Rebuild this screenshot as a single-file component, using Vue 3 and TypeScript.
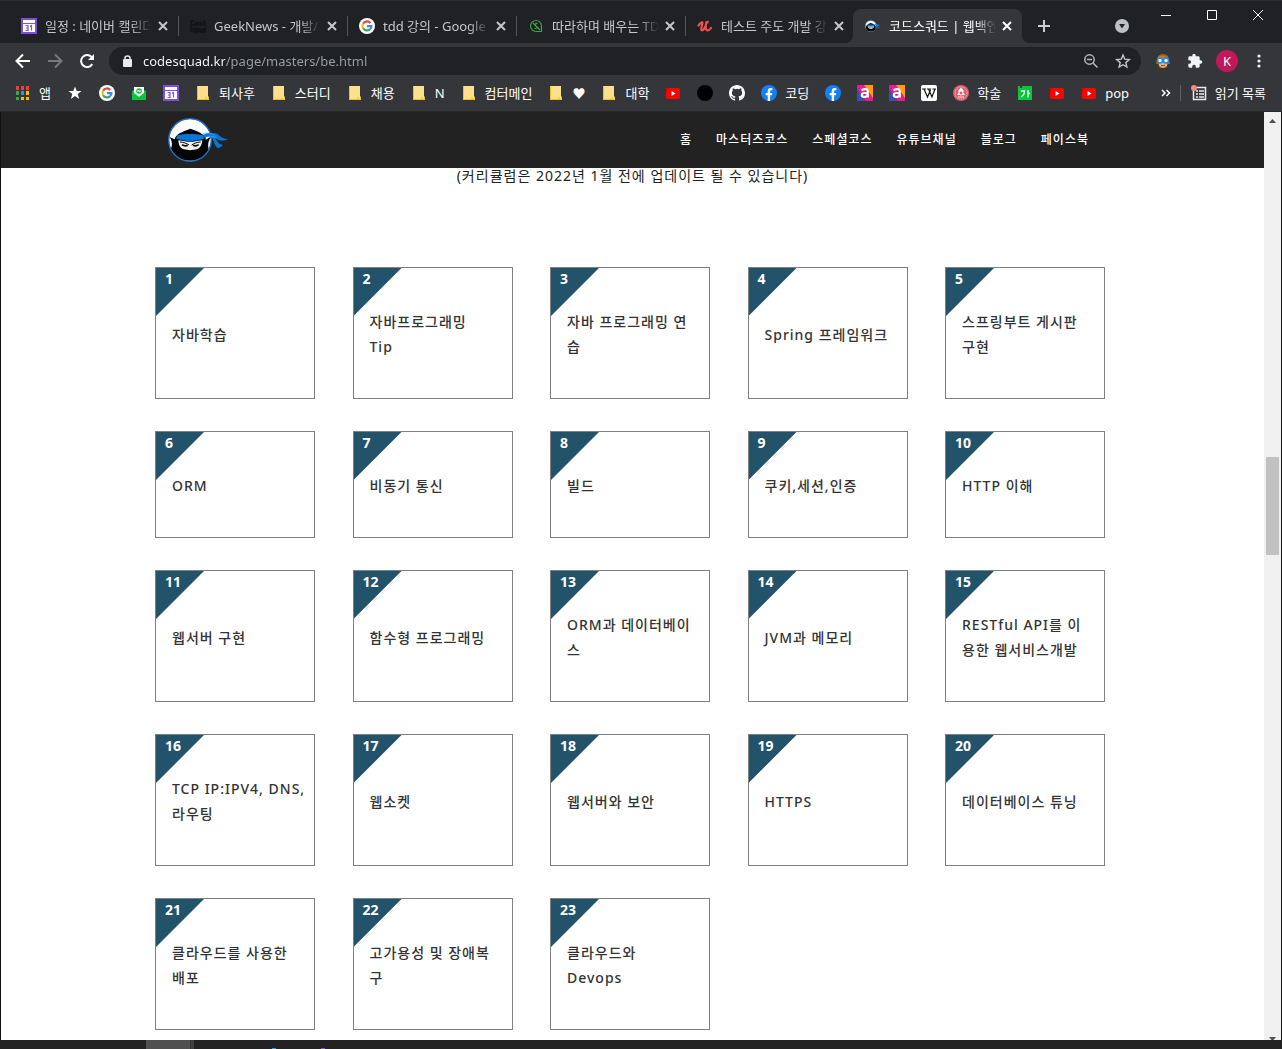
<script setup lang="ts">
interface Tab { icon: string; title: string; active?: boolean }
interface Bookmark { icon: string; label?: string; name: string }

const tabs: Tab[] = [
  { icon: 'calendar', title: '일정 : 네이버 캘린더' },
  { icon: 'geek', title: 'GeekNews - 개발/기술' },
  { icon: 'google', title: 'tdd 강의 - Google 검색' },
  { icon: 'leaf', title: '따라하며 배우는 TDD' },
  { icon: 'udemy', title: '테스트 주도 개발 강의' },
  { icon: 'ninja', title: '코드스쿼드 | 웹백엔드', active: true },
]

const bookmarks: Bookmark[] = [
  { icon: 'apps', label: '앱', name: '앱' },
  { icon: 'star', name: '즐겨찾기' },
  { icon: 'google', name: 'Google' },
  { icon: 'mail', name: '메일' },
  { icon: 'calendar', name: '캘린더' },
  { icon: 'folder', label: '퇴사후', name: '퇴사후' },
  { icon: 'folder', label: '스터디', name: '스터디' },
  { icon: 'folder', label: '채용', name: '채용' },
  { icon: 'folder', label: 'N', name: 'N' },
  { icon: 'folder', label: '컴터메인', name: '컴터메인' },
  { icon: 'folder', label: '♥', name: '♥' },
  { icon: 'folder', label: '대학', name: '대학' },
  { icon: 'youtube', name: 'YouTube' },
  { icon: 'dot', name: '검정' },
  { icon: 'github', name: 'GitHub' },
  { icon: 'facebook', label: '코딩', name: '코딩' },
  { icon: 'facebook', name: 'Facebook' },
  { icon: 'able', name: '에이블' },
  { icon: 'able', name: '에이블' },
  { icon: 'wiki', name: 'Wikipedia' },
  { icon: 'seal', label: '학술', name: '학술' },
  { icon: 'spell', name: '맞춤법' },
  { icon: 'youtube', name: 'YouTube' },
  { icon: 'youtube', label: 'pop', name: 'pop' },
]

const menu: string[] = ['홈', '마스터즈코스', '스페셜코스', '유튜브채널', '블로그', '페이스북']

const courses: string[] = [
  '자바학습', '자바프로그래밍\nTip', '자바 프로그래밍 연\n습', 'Spring 프레임워크', '스프링부트 게시판\n구현',
  'ORM', '비동기 통신', '빌드', '쿠키,세션,인증', 'HTTP 이해',
  '웹서버 구현', '함수형 프로그래밍', 'ORM과 데이터베이\n스', 'JVM과 메모리', 'RESTful API를 이\n용한 웹서비스개발',
  'TCP IP:IPV4, DNS,\n라우팅', '웹소켓', '웹서버와 보안', 'HTTPS', '데이터베이스 튜닝',
  '클라우드를 사용한\n배포', '고가용성 및 장애복\n구', '클라우드와\nDevops',
]
</script>

<template>
  <svg class="sprite" aria-hidden="true">
    <symbol id="i-calendar" viewBox="0 0 16 16">
      <rect width="16" height="16" fill="#7b50e0" /><rect x="2" y="2" width="12" height="3" fill="#fff" /><rect x="2" y="6" width="12" height="8" fill="#fff" />
      <path d="M4.500 7.500H7V12.500H4.500M5 10H7M9 8.500L10.500 7.500V12.500" fill="none" stroke="#7b50e0" stroke-width="1.200" />
    </symbol>
    <symbol id="i-geek" viewBox="0 0 16 16">
      <g fill="none" stroke="#111214" stroke-width="1.300">
        <path d="M4 3H1v4h3V5M6 5h2.500M8 4.500H6V7h2.500M10 5.500h2.500M12.500 4.500H10V7h2.500M14 2v5M16 4l-2 2 2 1.500" />
        <path d="M1 14V9l3 5V9M6 12h2.500v-1.500H6V14h2.500M10 10v4h1.500v-3V14H13v-4M16 10.500h-1.500V12H16v2h-2" />
      </g>
    </symbol>
    <symbol id="i-google" viewBox="0 0 16 16">
      <circle cx="8" cy="8" r="8" fill="#fff" />
      <g fill="none" stroke-width="2.200">
        <path d="M4.100 5.700A4.500 4.500 0 0 1 11.300 4.900" stroke="#ea4335" />
        <path d="M4.100 5.700A4.500 4.500 0 0 0 4.100 10.300" stroke="#fbbc05" />
        <path d="M4.100 10.300A4.500 4.500 0 0 0 10.900 11.400" stroke="#34a853" />
        <path d="M8 8.200h4.400A4.500 4.500 0 0 1 10.900 11.400" stroke="#4285f4" />
      </g>
    </symbol>
    <symbol id="i-leaf" viewBox="0 0 16 16">
      <g fill="none" stroke="#35a84a" stroke-width="1.200">
        <path d="M8 2.500A5.500 5.500 0 1 0 8 13.500H13.500V8A5.500 5.500 0 0 0 8 2.500Z" /><path d="M5 5L12 12M9.500 5.500C7.500 5 6.500 7 8 8S9.500 10.500 6.500 10.500" />
      </g>
    </symbol>
    <symbol id="i-udemy" viewBox="0 0 16 16">
      <path d="M1.500 7.500C3 5 5 4 5.500 4.500S3.500 10 4.500 12C6 13.500 9 9 9.500 4C8.500 8 8.500 12 10.500 12.500C12 12.500 13 11.500 14 10" fill="none" stroke="#ec5252" stroke-width="2.200" stroke-linecap="round" stroke-linejoin="round" />
      <path d="M9 3.500L12 2.500L11 6Z" fill="#ec5252" />
    </symbol>
    <symbol id="i-ninja" viewBox="84 27 180 138">
      <circle cx="150" cy="96" r="63" fill="#fff" />
      <path d="M89 87L104 94C105 87 111 80 119 76C128 71 137 67 151 62C166 67 178 71 186 78C196 82 199 88 197 95L212 86C208 96 202 104 206 122C200 146 176 158 150 158C122 158 100 146 93 122C98 108 96 99 89 87Z" fill="#050505" />
      <circle cx="150" cy="96" r="64" fill="none" stroke="#1871cc" stroke-width="4" />
      <path d="M112 82C136 76 168 77 190 82L192 92C177 96 162 98 151 101C139 98 122 95 108 92Z" fill="#0875d8" />
      <path d="M190 82C203 70 218 75 233 78C242 88 251 93 264 94C251 101 239 98 225 91C234 104 239 109 249 111C243 116 241 120 233 120C222 114 224 98 213 87C205 85 198 86 190 91Z" fill="#0875d8" />
      <path d="M188 78C200 72 213 77 226 82M207 84L230 88" fill="none" stroke="#59aef5" stroke-width="2" />
      <path d="M115 97C130 99 140 102 151 102C162 102 172 99 187 97C185 111 182 120 170 124Q150 129 132 124C119 120 116 110 115 97Z" fill="#f1f1f1" />
      <path d="M120 102C132 103 140 106 147 111M182 102C170 103 162 106 155 111" fill="none" stroke="#0b0b0b" stroke-width="3" />
      <path d="M126 110Q134 116 143 112M159 112Q168 116 176 110" fill="none" stroke="#0b0b0b" stroke-width="5" />
    </symbol>
    <symbol id="i-apps" viewBox="0 0 16 16">
      <path d="M1 1h3v4H1zM6 1h3v4H6zM11 1h3v4h-3z" fill="#ea4335" />
      <path d="M1 6h3v4H1zM1 12h3v3H1z" fill="#34a853" /><path d="M6 6h3v4H6z" fill="#4285f4" /><path d="M11 6h3v4h-3zM6 12h3v3H6zM11 12h3v3h-3z" fill="#fbbc05" />
    </symbol>
    <symbol id="i-star" viewBox="0 0 16 16"><path d="M8 1.500L9.700 6H14.500L10.700 9L12.200 14L8 11.100L3.800 14L5.300 9L1.500 6H6.300Z" fill="#fff" /></symbol>
    <symbol id="i-mail" viewBox="0 0 16 16">
      <path d="M1 6L3 5V2H13V5L15 6V15H1Z" fill="#0ac63d" /><path d="M3 2H13V8L8 12L3 8Z" fill="#fff" /><circle cx="8" cy="6" r="2.800" fill="#0ac63d" /><path d="M7 7V5L9 7V5" stroke="#fff" fill="none" /><path d="M1 7L8 12L15 7V15H1Z" fill="#0ac63d" />
    </symbol>
    <symbol id="i-folder" viewBox="0 0 16 16"><path d="M2 1H13V12H14V15H2Z" fill="#ffe08a" /><path d="M2.500 1V14.500H11M13.500 11.500V14.500H11V12" stroke="#f0c02c" fill="none" /></symbol>
    <symbol id="i-youtube" viewBox="0 0 16 16"><rect x="1" y="3" width="14" height="11" rx="2" fill="#f00" /><path d="M6.500 6V11L10.500 8.500Z" fill="#fff" /></symbol>
    <symbol id="i-dot" viewBox="0 0 16 16"><circle cx="8" cy="8" r="8" fill="#000" /></symbol>
    <symbol id="i-github" viewBox="0 0 16 16"><path fill="#fff" d="M8 0C3.580 0 0 3.580 0 8c0 3.540 2.290 6.530 5.470 7.590.4.070.55-.17.55-.38 0-.19-.01-.82-.01-1.490-2.010.37-2.530-.49-2.690-.94-.09-.23-.48-.94-.82-1.130-.28-.15-.68-.52-.01-.53.63-.01 1.080.58 1.230.82.72 1.210 1.870.87 2.330.66.07-.52.28-.87.51-1.070-1.780-.2-3.640-.89-3.640-3.950 0-.87.31-1.590.82-2.150-.08-.2-.36-1.020.08-2.120 0 0 .67-.21 2.200.82a7.600 7.600 0 0 1 4 0c1.530-1.040 2.200-.82 2.200-.82.44 1.100.16 1.920.08 2.120.51.56.82 1.270.82 2.150 0 3.070-1.870 3.750-3.650 3.950.29.25.54.73.54 1.480 0 1.070-.01 1.930-.01 2.200 0 .21.15.46.55.38A8 8 0 0 0 16 8c0-4.420-3.580-8-8-8z" /></symbol>
    <symbol id="i-facebook" viewBox="0 0 16 16"><circle cx="8" cy="8" r="8" fill="#1480f0" /><path d="M6.700 16V10.300H4.700V8H6.700V6.300C6.700 4.200 8 3.100 9.800 3.100L11.400 3.200V5.200H10.400C9.400 5.200 9.100 5.800 9.100 6.500V8H11.300L10.900 10.300H9.100V16Z" fill="#fff" /></symbol>
    <symbol id="i-able" viewBox="0 0 16 16">
      <rect width="16" height="16" rx="1" fill="#ec1a8d" /><path d="M0 3L9 16H0Z" fill="#3e4db4" /><path d="M7 0H16V13Z" fill="#ff9c12" />
      <path d="M4.500 5.500Q6 4 8.500 4.200Q10.800 4.500 10.800 6.500V12.500M10.500 8H7Q4.800 8.200 4.800 10T7 12Q10 12 10.500 9.500" fill="none" stroke="#fff" stroke-width="2.200" />
    </symbol>
    <symbol id="i-wiki" viewBox="0 0 16 16"><rect width="16" height="16" rx="2" fill="#fff" /><path d="M1 4H5M6 4H10M11.500 4H15M3 4L6.500 12L9.500 5M7.500 4L11 12L14 4" fill="none" stroke="#111" stroke-width="1.200" /></symbol>
    <symbol id="i-seal" viewBox="0 0 16 16">
      <circle cx="8" cy="8" r="8" fill="#d9606d" /><circle cx="8" cy="8" r="6" fill="none" stroke="#f7cdd0" stroke-dasharray="1 1" /><path d="M8 2.500L11 6L10 7L12 10H4L6 7L5 6Z" fill="#fff" /><path d="M5 12H11M8 4V11" stroke="#fbe5e6" /><circle cx="8" cy="8" r="1.500" fill="#d9606d" />
    </symbol>
    <symbol id="i-spell" viewBox="0 0 16 16"><path d="M1 1H3V3H5V1H15V15H1Z" fill="#0ac63d" /><path d="M4 6H7.500Q7.500 10 4 12M11 5V12.500M11 8.500H13" stroke="#fff" stroke-width="1.300" fill="none" /></symbol>
  </svg>

  <div class="browser">
    <header class="tabstrip">
      <div class="tabs">
        <div v-for="tab in tabs" :key="tab.title" class="tab" :class="{ active: tab.active }">
          <svg class="icon"><use :href="'#i-' + tab.icon" /></svg>
          <span class="tab-title">{{ tab.title }}</span>
          <button class="close" aria-label="탭 닫기"><svg viewBox="0 0 10 10"><path d="M1 1L9 9M9 1L1 9" /></svg></button>
        </div>
      </div>
      <button class="plain new-tab" aria-label="새 탭"><svg width="12" height="12" viewBox="0 0 12 12"><path d="M6 0V12M0 6H12" stroke="#c9ccd1" stroke-width="2" /></svg></button>
      <button class="plain search-tabs" aria-label="탭 검색"><svg width="14" height="14" viewBox="0 0 14 14"><circle cx="7" cy="7" r="7" fill="#bdc1c6" /><path d="M4 5H10L7 9.500Z" fill="#202124" /></svg></button>
      <div class="window-buttons">
        <button class="plain" aria-label="최소화"><svg width="10" height="10" viewBox="0 0 10 10"><path d="M0 5.500H10" stroke="#fff" /></svg></button>
        <button class="plain" aria-label="최대화"><svg width="10" height="10" viewBox="0 0 10 10"><path d="M.5.5H9.500V9.500H.5Z" stroke="#fff" fill="none" /></svg></button>
        <button class="plain" aria-label="닫기"><svg width="10" height="10" viewBox="0 0 10 10"><path d="M0 0L10 10M10 0L0 10" stroke="#fff" /></svg></button>
      </div>
    </header>

    <div class="toolbar">
      <button class="plain tool" aria-label="뒤로"><svg width="16" height="16" viewBox="0 0 16 16"><path d="M15 8H2M8 1.500L1.500 8L8 14.500" fill="none" stroke="#fff" stroke-width="2" /></svg></button>
      <button class="plain tool" aria-label="앞으로"><svg width="16" height="16" viewBox="0 0 16 16"><path d="M1 8H14M8 1.500L14.500 8L8 14.500" fill="none" stroke="#77797d" stroke-width="2" /></svg></button>
      <button class="plain tool" aria-label="새로고침"><svg width="16" height="16" viewBox="0 0 16 16"><path d="M13.300 11A6 6 0 1 1 12.500 4" fill="none" stroke="#fff" stroke-width="2" /><path d="M15 1V7H9Z" fill="#fff" /></svg></button>
      <div class="omnibox">
        <svg width="10" height="13" viewBox="0 0 10 13"><rect y="4" width="9" height="8" rx="1" fill="#e8eaed" /><path d="M2 5V3Q2 1 4.500 1T7 3V5" fill="none" stroke="#e8eaed" stroke-width="1.500" /></svg>
        <input class="address" type="text" value="codesquad.kr/page/masters/be.html" aria-label="주소창">
        <button class="plain tool" aria-label="축소"><svg width="16" height="16" viewBox="0 0 16 16" fill="none" stroke="#b4b8bc" stroke-width="1.500"><circle cx="6.500" cy="6.500" r="4.700" /><path d="M4 6.500H9M10 10L14.500 14.500" /></svg></button>
        <button class="plain tool" aria-label="북마크 추가"><svg width="16" height="16" viewBox="0 0 16 16"><path d="M8 2L9.700 6.200L14.300 6.600L10.800 9.600L11.900 14L8 11.700L4.100 14L5.200 9.600L1.700 6.600L6.300 6.200Z" fill="none" stroke="#c3c6ca" stroke-width="1.400" /></svg></button>
      </div>
      <button class="plain tool" aria-label="확장 프로그램"><svg width="16" height="16" viewBox="0 0 16 16"><path d="M3 3Q8-1 13 3L15 11H13L11 15H5L3 11H1Z" fill="#a76518" /><path d="M4 5H12V13L8 15L4 13Z" fill="#e9ae7a" /><path d="M3 4Q8 1 13 5H3Z" fill="#c67b20" /><g fill="#f2faff" stroke="#2388e8" stroke-width="1.500"><circle cx="5" cy="7.500" r="2.500" /><circle cx="11" cy="7.500" r="2.500" /></g><path d="M6 12.500H10" stroke="#a34e25" /></svg></button>
      <button class="plain tool" aria-label="확장 프로그램 목록"><svg width="16" height="16" viewBox="0 0 24 24"><path fill="#f1f3f4" d="M20.500 11H19V7c0-1.100-.9-2-2-2h-4V3.500a2.500 2.500 0 0 0-5 0V5H4c-1.100 0-2 .9-2 2v3.800h1.500a2.700 2.700 0 0 1 0 5.400H2V20c0 1.100.9 2 2 2h3.800v-1.500a2.700 2.700 0 0 1 5.400 0V22H17c1.100 0 2-.9 2-2v-4h1.500a2.500 2.500 0 0 0 0-5z" /></svg></button>
      <button class="plain tool avatar" aria-label="프로필">K</button>
      <button class="plain tool" aria-label="메뉴"><svg width="4" height="14" viewBox="0 0 4 14" fill="#f1f3f4"><circle cx="2" cy="2" r="1.600" /><circle cx="2" cy="7" r="1.600" /><circle cx="2" cy="12" r="1.600" /></svg></button>
    </div>

    <nav class="bookmarks" aria-label="북마크">
      <a v-for="(mark, i) in bookmarks" :key="i" href="#" class="bookmark" :aria-label="mark.name">
        <svg class="icon"><use :href="'#i-' + mark.icon" /></svg>
        <span v-if="mark.label">{{ mark.label }}</span>
      </a>
      <div class="reading">
        <button class="plain more" aria-label="북마크 더보기"><svg width="10" height="8" viewBox="0 0 10 8"><path d="M1 1L4 4L1 7M5.500 1L8.500 4L5.500 7" fill="none" stroke="#fff" stroke-width="1.500" /></svg></button>
        <button class="plain reading-list"><svg width="16" height="16" viewBox="0 0 16 16"><path d="M2.500 5V14.500H14.500V2.500H6M5 6H7M8 6H13M5 9H7M8 9H13M5 12H7M8 12H13" fill="none" stroke="#e8eaed" stroke-width="1.500" /><circle cx="3" cy="3" r="3" fill="#f28b82" /></svg><span>읽기 목록</span></button>
      </div>
    </nav>

    <div class="viewport">
      <div class="page">
        <div class="site-header">
          <div class="site-inner">
            <a href="#" class="logo" aria-label="코드스쿼드"><svg width="60" height="46"><use href="#i-ninja" /></svg></a>
            <nav class="site-menu"><a v-for="item in menu" :key="item" href="#">{{ item }}</a></nav>
          </div>
        </div>
        <main>
          <p class="notice">(커리큘럼은 2022년 1월 전에 업데이트 될 수 있습니다)</p>
          <ol class="courses">
            <li v-for="(course, i) in courses" :key="i" class="course">
              <span class="number">{{ i + 1 }}</span>
              <span class="course-title">{{ course }}</span>
            </li>
          </ol>
        </main>
      </div>
      <div class="scrollbar" aria-hidden="true">
        <svg width="17" height="17" viewBox="0 0 17 17"><path d="M5 11L8.500 7L12 11Z" fill="#505050" /></svg>
        <div class="track-top"></div>
        <div class="thumb"></div>
        <div class="track-bottom"></div>
        <svg width="17" height="4" viewBox="0 0 17 4"><path d="M5 1H12L8.500 5Z" fill="#505050" /></svg>
      </div>
    </div>
    <footer class="taskbar"><div class="task"></div><div class="task-edge"></div><i class="hint blue"></i><i class="hint violet"></i></footer>
  </div>
</template>

<style>
body { margin: 0; background: #222; }
</style>

<style scoped>
* { box-sizing: border-box; }
.sprite { position: absolute; width: 0; height: 0; }
.browser {
  display: flex;
  flex-direction: column;
  min-height: 100vh;
  font: 13px/16px "Noto Sans", "Noto Sans CJK KR", sans-serif;
  color: #fff;
}
a { color: inherit; text-decoration: none; }
button { font: inherit; color: inherit; }
.plain { display: flex; align-items: center; justify-content: center; padding: 0; border: 0; background: none; }
.icon { width: 16px; height: 16px; flex: none; }

.tabstrip { display: flex; height: 43px; padding: 0 1px 0 9px; background: #202124; border-top: 1px solid #2a2c2a; }
.tabs { display: flex; padding-top: 8px; }
.tab { position: relative; display: flex; align-items: center; width: 169px; height: 34px; padding: 0 10px 0 12px; color: #c4c7cb; }
.tab:not(.active)::after { content: ""; position: absolute; right: -1px; top: 7px; width: 1px; height: 20px; background: #54565a; }
.tab:nth-last-child(2)::after { display: none; }
.tab.active { margin-left: -1px; background: #35363a; border-radius: 8px 8px 0 0; color: #fff; }
.tab.active::before, .tab.active::after { content: ""; position: absolute; bottom: 0; width: 8px; height: 8px; }
.tab.active::before { left: -8px; background: radial-gradient(circle at 0 0, transparent 8px, #35363a 8px); }
.tab.active::after { right: -8px; background: radial-gradient(circle at 100% 0, transparent 8px, #35363a 8px); }
.tab-title {
  flex: 1;
  margin-left: 8px;
  white-space: nowrap;
  overflow: hidden;
  mask-image: linear-gradient(to right, #000 80%, transparent);
}
.close { display: flex; padding: 0; margin-left: 6px; border: 0; background: none; }
.close svg { width: 10px; height: 10px; fill: none; stroke: currentColor; stroke-width: 2; }
.new-tab { width: 44px; padding-top: 8px; }
.search-tabs { width: 28px; margin-left: auto; padding-top: 8px; }
.window-buttons { display: flex; height: 28px; margin-left: 7px; }
.window-buttons .plain { width: 46px; }

.toolbar { display: flex; align-items: center; height: 36px; padding: 0 7px; background: #35363a; }
.tool { width: 32px; height: 28px; flex: none; }
.omnibox { display: flex; align-items: center; flex: 1; height: 28px; margin: 0 6px; padding: 0 2px 0 14px; border-radius: 14px; background: #202124; }
.address {
  flex: 1;
  min-width: 0;
  margin-left: 10px;
  padding: 0;
  border: 0;
  font: 13px/20px "Noto Sans", "Noto Sans CJK KR", sans-serif;
  color: transparent;
  background: linear-gradient(to right, #fff 82px, #9aa0a6 82px);
  background-clip: text;
}
.avatar { width: 22px; height: 22px; margin: 0 5px; border-radius: 50%; background: #c2185b; }

.bookmarks { display: flex; align-items: center; height: 33px; padding: 0 8px 4px 7px; background: #35363a; border-bottom: 1px solid #28292c; }
.bookmark { display: flex; align-items: center; gap: 8px; padding: 0 8px; white-space: nowrap; }
.reading { display: flex; align-items: center; margin-left: auto; }
.more { width: 28px; height: 16px; border-right: 1px solid #5f6368; }
.reading-list { gap: 8px; padding: 0 8px 0 10px; white-space: nowrap; }

.viewport { display: flex; flex: 1; border: solid #111; border-width: 0 1px; background: #fff; }
.page { flex: 1; min-width: 0; }
.site-header { height: 56px; background: #222; }
.site-inner { display: flex; align-items: center; justify-content: space-between; max-width: 929px; height: 56px; margin: 0 auto; }
.logo { display: flex; }
.site-menu { display: flex; gap: 24px; margin-right: 8px; font-size: 12px; font-weight: 500; letter-spacing: 1px; }
.notice { margin: 0; color: #222; font-size: 14px; font-weight: 400; line-height: 16px; letter-spacing: 1px; text-align: center; }
.courses {
  display: grid;
  grid-template-columns: repeat(5, 160px);
  justify-content: space-between;
  row-gap: 32px;
  max-width: 955px;
  margin: 83px auto 0;
  padding: 0 5px 10px 0;
  list-style: none;
}
.course {
  position: relative;
  display: flex;
  align-items: center;
  padding: 41px 0 39px 16px;
  border: 1px solid #808080;
  color: #333;
  font-size: 14px;
  font-weight: 500;
  line-height: 25px;
}
.number {
  position: absolute;
  left: 0;
  top: 0;
  width: 48px;
  height: 48px;
  padding: 1px 0 0 9px;
  background: #23536b;
  clip-path: polygon(0 0, 100% 0, 0 100%);
  line-height: 20px;
  font-weight: 700;
  color: #fff;
}
.course-title { white-space: pre; letter-spacing: 1px; }

.scrollbar { display: flex; flex-direction: column; width: 17px; background: #f0f0f0; }
.track-top { flex: 328; }
.thumb { flex: 98; margin: 0 2px; background: #c1c1c1; }
.track-bottom { flex: 482; }

.taskbar { display: flex; align-items: flex-end; height: 9px; padding-left: 146px; background: #222; }
.task { width: 44px; height: 9px; background: #505050; }
.task-edge { width: 4px; height: 9px; background: #404040; border-left: 1px solid #333; }
.hint { width: 4px; height: 1px; }
.blue { margin-left: 78px; background: #1ba1e2; }
.violet { margin-left: 45px; background: #8a4fd0; }
</style>
